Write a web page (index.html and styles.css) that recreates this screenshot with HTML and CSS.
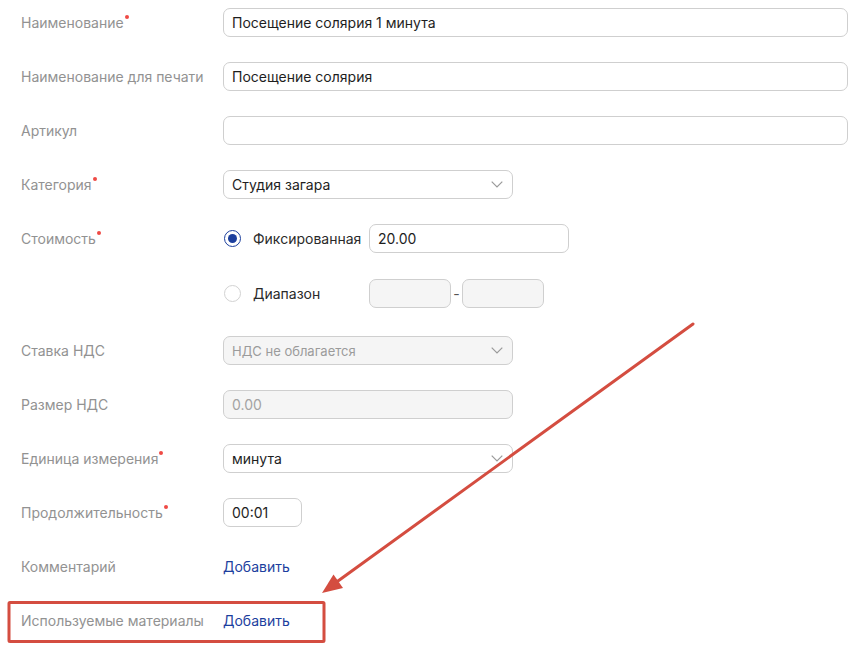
FILE: index.html
```html
<!DOCTYPE html>
<html lang="ru">
<head>
    <meta charset="UTF-8">
    <meta name="viewport" content="width=device-width, initial-scale=1.0">
    <title>Услуга</title>
    <link rel="stylesheet" href="styles.css">
</head>
<body>
    <form class="form">
        <div class="row">
            <div class="label"><span class="req">Наименование</span></div>
            <div class="field"><div class="input full">Посещение солярия 1 минута</div></div>
        </div>
        <div class="row">
            <div class="label"><span>Наименование для печати</span></div>
            <div class="field"><div class="input full">Посещение солярия</div></div>
        </div>
        <div class="row">
            <div class="label"><span>Артикул</span></div>
            <div class="field"><div class="input full"></div></div>
        </div>
        <div class="row">
            <div class="label"><span class="req">Категория</span></div>
            <div class="field">
                <div class="input select">Студия загара
                    <svg class="chevron" width="12" height="7" viewBox="0 0 12 7"><path d="M0.7 0.7 L6 6 L11.3 0.7" fill="none" stroke="#9a9a9a" stroke-width="1.2"/></svg>
                </div>
            </div>
        </div>
        <div class="row price">
            <div class="label"><span class="req">Стоимость</span></div>
            <div class="field options">
                <div class="option">
                    <span class="radio checked"></span>
                    <span class="option-name">Фиксированная</span>
                    <div class="input price-input">20.00</div>
                </div>
                <div class="option">
                    <span class="radio"></span>
                    <span class="option-name">Диапазон</span>
                    <div class="input range disabled"></div>
                    <span class="dash">-</span>
                    <div class="input range disabled"></div>
                </div>
            </div>
        </div>
        <div class="row">
            <div class="label"><span>Ставка НДС</span></div>
            <div class="field">
                <div class="input select disabled small">НДС не облагается
                    <svg class="chevron" width="12" height="7" viewBox="0 0 12 7"><path d="M0.7 0.7 L6 6 L11.3 0.7" fill="none" stroke="#9a9a9a" stroke-width="1.2"/></svg>
                </div>
            </div>
        </div>
        <div class="row">
            <div class="label"><span>Размер НДС</span></div>
            <div class="field"><div class="input select disabled muted">0.00</div></div>
        </div>
        <div class="row">
            <div class="label"><span class="req">Единица измерения</span></div>
            <div class="field">
                <div class="input select">минута
                    <svg class="chevron" width="12" height="7" viewBox="0 0 12 7"><path d="M0.7 0.7 L6 6 L11.3 0.7" fill="none" stroke="#9a9a9a" stroke-width="1.2"/></svg>
                </div>
            </div>
        </div>
        <div class="row">
            <div class="label"><span class="req">Продолжительность</span></div>
            <div class="field"><div class="input time">00:01</div></div>
        </div>
        <div class="row">
            <div class="label"><span>Комментарий</span></div>
            <div class="field"><a class="link" href="#">Добавить</a></div>
        </div>
        <div class="row">
            <div class="label"><span>Используемые материалы</span></div>
            <div class="field"><a class="link" href="#">Добавить</a></div>
        </div>
    </form>

    <!-- пометка поверх скриншота -->
    <svg class="annotation" width="865" height="652" viewBox="0 0 865 652">
        <line x1="693" y1="324" x2="338" y2="581" stroke="#d44d40" stroke-width="3" stroke-linecap="round"/>
        <polygon points="322,593 343,588 333.5,574.5" fill="#d44d40"/>
        <rect x="9" y="602.5" width="315" height="39" rx="1" fill="none" stroke="#d44d40" stroke-width="3"/>
    </svg>
</body>
</html>
```

FILE: styles.css
```css
* {
    margin: 0;
    padding: 0;
    box-sizing: border-box;
}

body {
    font-family: Inter, 'Noto Sans', sans-serif;
    font-size: 14px;
    color: #222;
    background: #fff;
    width: 865px;
    height: 652px;
    overflow: hidden;
    position: relative;
}

.form {
    padding: 8px 17px 0 21px;
}

.row {
    display: grid;
    grid-template-columns: 202px 1fr;
    align-items: start;
    margin-bottom: 25px;
}

.label {
    height: 29px;
    display: flex;
    align-items: center;
    color: #929292;
}

.req {
    position: relative;
}

.req::after {
    content: '';
    position: absolute;
    top: 1px;
    right: -5px;
    width: 4px;
    height: 4px;
    border-radius: 50%;
    background: #ef4a45;
}

.input {
    height: 29px;
    border: 1px solid #cfcfcf;
    border-radius: 7px;
    padding: 0 8px;
    display: flex;
    align-items: center;
    background: #fff;
    color: #1e1e1e;
}

.full {
    width: 100%;
}

.select {
    width: 290px;
    position: relative;
    justify-content: space-between;
}

.chevron {
    margin-right: 1px;
}

.disabled {
    background: #f5f5f5;
}

.small {
    font-size: 13px;
    color: #9b9b9b;
}

.muted {
    color: #a3a3a3;
}

.time {
    width: 79px;
}

.price {
    margin-top: 1px;
    margin-bottom: 28px;
}

.options {
    display: flex;
    flex-direction: column;
    gap: 26px;
}

.option {
    display: flex;
    align-items: center;
    height: 29px;
}

.radio {
    width: 17px;
    height: 17px;
    border-radius: 50%;
    border: 1px solid #d2d2d2;
    background: #fff;
    margin-left: 1px;
    margin-right: 12px;
    display: flex;
    align-items: center;
    justify-content: center;
}

.radio.checked {
    border: 1.5px solid #1c3f9d;
}

.radio.checked::after {
    content: '';
    width: 9px;
    height: 9px;
    border-radius: 50%;
    background: #1c3f9d;
}

.option-name {
    width: 116px;
    color: #2a2a2a;
}

.price-input {
    width: 200px;
}

.range {
    width: 82px;
}

.dash {
    width: 11px;
    text-align: center;
    color: #555;
}

.link {
    display: flex;
    align-items: center;
    height: 29px;
    color: #1d3f9e;
    text-decoration: none;
}

.annotation {
    position: absolute;
    left: 0;
    top: 0;
    pointer-events: none;
}
```
